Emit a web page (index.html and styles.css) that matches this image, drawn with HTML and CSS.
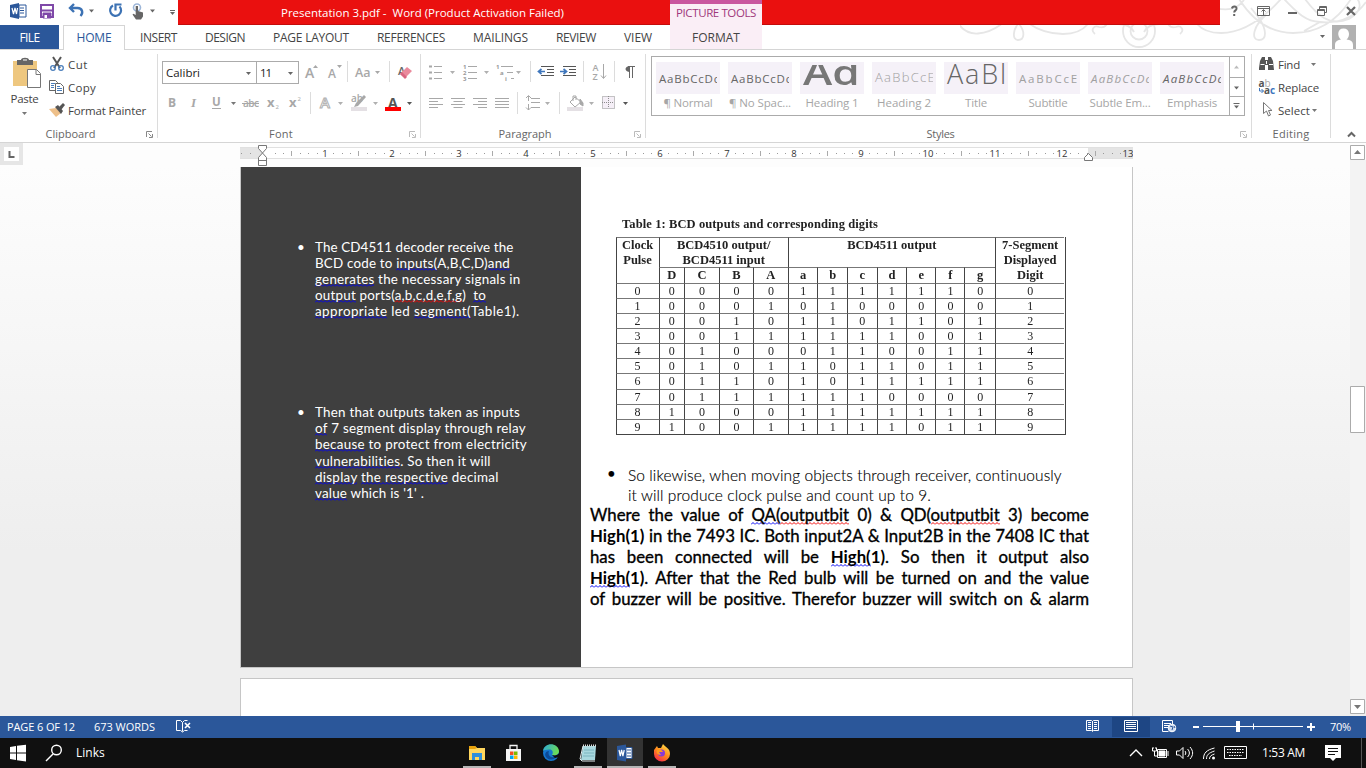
FILE: index.html
```html
<!DOCTYPE html>
<html lang="en">
<head>
<meta charset="utf-8">
<title>Presentation 3.pdf - Word</title>
<link rel="stylesheet" href="styles.css">
</head>
<body>
<div class="window">
  <svg class="swirls" width="406" height="49" viewBox="960 0 406 49">
    <g fill="none" stroke="#e6e6e6" stroke-width="1.800">
      <path d="M958 23c5 8 12 11 20 10.500s16-4 23-9M1018 24c-5 6-6 16 0 16 7 0 7-9 1-16M1028 23c10 7 22 11 35 11 12 0 20-4 25-10M1095 34c-5-4-1-9 4-7 3 1 6 0 8-3"/>
      <circle cx="1139" cy="31" r="16"/><circle cx="1139" cy="31" r="8.500"/>
      <path d="M1118 24c10 0 14 4 16 8M1160 24c-10 0-14 4-16 8M1180 34c5-4 1-9-4-7-3 1-6 0-8-3M1197 24c6 7 14 9 24 9 22 0 42-14 60-34M1239-1c14 22 32 34 54 34 24 0 44-12 58-34M1216 8c14 4 22 0 28-8M1266 15c-12 10-16 25-7 25 8 0 8-10 0-22l-8-10M1284-1c12 12 20 22 36 23M1305-1c12 16 24 28 44 20 14-8 12-18 6-22M1366 2c-10 14-24 22-46 20l-16 9"/>
    </g>
  </svg>
  <header class="titlebar">
    <div class="quick">
      <svg width="30" height="25" viewBox="6 0 30 25"><path d="M19 5h7v12h-7z" fill="#fff" stroke="#2b579a"/><path d="M20 8h4M20 10.500h4M20 13h4" stroke="#2b579a"/><path d="M10 5l9-2v16l-9-2z" fill="#2b579a"/><path d="M12 8l1.500 6 1.500-6 1.500 6 1-6" fill="none" stroke="#fff" stroke-width="1.200"/></svg>
      <svg width="30" height="25" viewBox="36 0 30 25"><path d="M41 5h12v12h-12z" fill="#fff" stroke="#7f49a8" stroke-width="2"/><path d="M41 11h12v-1h-12zM43 13h8v5h-8z" fill="#7f49a8" stroke="#7f49a8"/><path d="M44.500 15h2.500v3h-2.500z" fill="#fff"/></svg>
      <svg width="40" height="25" viewBox="66 0 40 25"><path d="M74 4l-4 4 4 4M70.500 8h7c5 0 6 5 3 8" fill="none" stroke="#3c72b4" stroke-width="2.400"/><path d="M89 9.500h5l-2.500 3z" fill="#666"/></svg>
      <svg width="24" height="25" viewBox="106 0 24 25"><path d="M113 5.500a5.500 5.500 0 1 0 6.500 1M115.500 10.500v-6h6" fill="none" stroke="#3c72b4" stroke-width="2.200"/></svg>
      <svg width="34" height="25" viewBox="130 0 34 25"><circle cx="137" cy="7.500" r="3.500" fill="none" stroke="#9db6d8" stroke-width="1.600"/><path d="M135.700 6h2.300v5l5 1.500v4l-2 3h-5l-3.500-5 1-.8 2.200 1.300z" fill="#666"/><path d="M150 9.500h5l-2.500 3z" fill="#666"/></svg>
      <svg width="14" height="25" viewBox="164 0 14 25"><path d="M170 10.500h5" stroke="#666"/><path d="M170 12h5l-2.500 3z" fill="#666"/></svg>
    </div>
    <div class="caption"><span class="fit" data-w="283">Presentation 3.pdf -&nbsp; Word (Product Activation Failed)</span></div>
    <div class="wincontrols">
      <svg width="146" height="25" viewBox="1220 0 146 25" fill="none" stroke="#666"><path d="M1232 8.500c.5-3 5-2.500 4.500.2 0 1.800-2.300 1.600-2.300 3.800M1234.200 14v2" stroke-width="2"/><path d="M1257.500 6.500h12v9h-12zM1257 8.500h13M1263.500 15v-5M1261.500 11.500l2-2 2 2"/><path d="M1288 13h9" stroke-width="2"/><path d="M1317.500 9.500h7v6h-7zM1319.500 9v-2.500h7v6h-2M1317.500 10.500h7M1319.500 7.500h7"/><path d="M1347 7l8 8M1355 7l-8 8" stroke-width="2.200"/></svg>
    </div>
    <div class="tooltab"><span class="fit" data-w="80">PICTURE TOOLS</span></div>
  </header>

  <nav class="tabs">
    <div class="file"><span class="fit" data-w="20">FILE</span></div>
    <div class="home"><span class="fit" data-w="35">HOME</span></div>
    <div class="tablist">
      <span class="fit" data-w="37">INSERT</span><span class="fit" data-w="40">DESIGN</span><span class="fit" data-w="76">PAGE LAYOUT</span><span class="fit" data-w="68">REFERENCES</span><span class="fit" data-w="55">MAILINGS</span><span class="fit" data-w="40">REVIEW</span><span class="fit" data-w="28">VIEW</span>
    </div>
    <div class="format"><span class="fit" data-w="48">FORMAT</span></div>
    <div class="account"><svg width="50" height="25" viewBox="1316 25 50 25"><path d="M1320 35h5l-2.500 3z" fill="#666"/><path d="M1332 25h24v24h-24z" fill="#b1b1b1"/><path d="M1335 49v-4c0-4 3-5 6-5.500-4-3-4-11 2.500-11s7 8 3 11c4 .5 6.500 1.500 6.500 5.500v4z" fill="#fff"/></svg></div>
  </nav>

  <section class="ribbon">
    <div class="group clipboard">
      <div class="groupbody">
        <div class="paste">
          <svg width="49" height="40" viewBox="0 50 49 40"><path d="M13 61h24v25h-24z" fill="#eec77f"/><path d="M17 60h4c0-3 8-3 8 0h4v5h-16z" fill="#666"/><path d="M23 60h4" stroke="#fff"/><path d="M27.500 69.500h9l4 4v14h-13z" fill="#fff" stroke="#777"/><path d="M36 69.500v5h5" fill="none" stroke="#777"/></svg>
          <span class="fit" data-w="28">Paste</span>
          <svg width="49" height="12" viewBox="0 108 49 12"><path d="M22 113h5l-2.500 3z" fill="#777"/></svg>
        </div>
        <div class="cmds">
          <div class="cmd"><svg width="19" height="23" viewBox="49 53 19 23" fill="none"><path d="M53 57l7 11M61 57l-7 11" stroke="#555" stroke-width="2"/><circle cx="53" cy="68" r="2.300" stroke="#4a7ebb" stroke-width="1.300"/><circle cx="61" cy="68" r="2.300" stroke="#4a7ebb" stroke-width="1.300"/></svg><span class="fit" data-w="20">Cut</span></div>
          <div class="cmd"><svg width="19" height="23" viewBox="49 76 19 23" fill="#fff" stroke="#666"><path d="M49.500 80.500h6l2 2v8h-8z"/><path d="M51 83.500h4M51 85.500h3M51 87.500h3" stroke="#4a7ebb"/><path d="M55.500 83.500h5l3 3v7h-8z"/><path d="M57 88.500h5M57 90.500h5M57 86.500h3" stroke="#4a7ebb"/></svg><span class="fit" data-w="28">Copy</span></div>
          <div class="cmd"><svg width="19" height="23" viewBox="49 99 19 23"><path d="M49 109l7-1 5 5-5 4z" fill="#eec08a"/><path d="M55 107l3-2 5 6-2 3z" fill="#555"/><path d="M59 107l4-4 2 2-4 5z" fill="#555"/></svg><span class="fit" data-w="78">Format Painter</span></div>
        </div>
      </div>
      <div class="grouplabel"><span class="fit" data-w="50">Clipboard</span><svg class="launcher" width="9" height="9"><path d="M1.500 7V1.500H7M3.500 3.500l3 3M7.500 4v3.500H4" fill="none" stroke="#888"/></svg></div>
    </div>

    <div class="group font">
      <div class="row first">
        <div class="combo name"><span class="fit" data-w="34">Calibri</span><svg width="9" height="8"><path d="M2 3h5l-2.500 3z" fill="#666"/></svg></div>
        <div class="combo size"><span class="fit" data-w="11">11</span><svg width="9" height="8"><path d="M2 3h5l-2.500 3z" fill="#666"/></svg></div>
        <svg width="121" height="26" viewBox="299 60 121 26"><g font-family="Open Sans,sans-serif" font-weight="600" fill="#a8a8a8"><text x="305" y="78" font-size="14">A</text><text x="328" y="78" font-size="12">A</text><text x="355" y="77" font-size="12.500">Aa</text><text x="398" y="75" font-size="11" fill="#666">A</text></g><path d="M313 68h5l-2.500-3zM337 65h5l-2.500 3zM375 71h5l-2.500 3z" fill="#a8a8a8"/><path d="M347.500 61v21M389.500 61v21" stroke="#dcdcdc"/><path d="M400 74l7-7 5 4-7 7z" fill="#ea8a9c"/><path d="M400 74l5 5 2-2-5-5z" fill="#d96680"/></svg>
      </div>
      <div class="row">
        <svg width="258" height="26" viewBox="162 90 258 26"><g font-family="Open Sans,sans-serif" fill="#a8a8a8"><text x="168" y="107" font-size="12" font-weight="700">B</text><text x="191" y="107" font-size="13" font-family="Liberation Serif,serif" font-style="italic" font-weight="700">I</text><text x="212" y="106" font-size="11.500" font-weight="700">U</text><text x="243" y="107" font-size="10" font-weight="600" textLength="16">abc</text><text x="267" y="107" font-size="13" font-weight="700">x</text><text x="275.500" y="109" font-size="6">2</text><text x="289" y="107" font-size="13" font-weight="700">x</text><text x="297.500" y="101" font-size="6">2</text><text x="320" y="108" font-size="15" fill="#fff" stroke="#b0b0b0" font-weight="600">A</text><text x="351" y="102" font-size="10" font-weight="600">ab</text><text x="388" y="108" font-size="14" font-weight="700" fill="#555">A</text></g><path d="M212 108.500h9M242 103.500h17" stroke="#a8a8a8"/><path d="M310.500 92v22" stroke="#dcdcdc"/><path d="M366 97l-8 9-4 1 2-4 8-8z" fill="#a8a8a8"/><path d="M351 107h16v4h-16z" fill="#e4e0e4"/><path d="M385 107h16v4h-16z" fill="#f00"/><path d="M231 102h5l-2.500 3z" fill="#777"/><path d="M338 102h5l-2.500 3zM373 102h5l-2.500 3z" fill="#b0b0b0"/><path d="M407 102h5l-2.500 3z" fill="#555"/></svg>
      </div>
      <div class="grouplabel"><span class="fit" data-w="24">Font</span><svg class="launcher" width="9" height="9"><path d="M1.500 7V1.500H7M3.500 3.500l3 3M7.500 4v3.500H4" fill="none" stroke="#bbb"/></svg></div>
    </div>

    <div class="group paragraph">
      <div class="row first">
        <svg width="108" height="26" viewBox="421 60 108 26" fill="none" stroke="#a8a8a8"><path d="M434 66.500h8M434 72.500h8M434 78.500h8M468 66.500h9M468 72.500h9M468 78.500h9M501 66.500h12M507 72.500h6M511 78.500h3"/><path d="M429 65.500h3v2h-3zM429 71.500h3v2h-3zM429 77.500h3v2h-3z" fill="#a8a8a8" stroke="none"/><g font-family="Open Sans,sans-serif" font-size="6" font-weight="700" fill="#999" stroke="none"><text x="463" y="68.500">1</text><text x="463" y="74.500">2</text><text x="463" y="80.500">3</text><text x="496" y="68.500">1</text><text x="500" y="74.500">a</text><text x="505" y="80.500">i</text></g><path d="M450 71h5l-2.500 3zM484 71h5l-2.500 3zM516 71h5l-2.500 3z" fill="#b0b0b0" stroke="none"/></svg>
        <svg width="117" height="26" viewBox="529 60 117 26" fill="none" stroke="#555"><path d="M530.500 61v21M583.500 61v21M614.500 61v21" stroke="#dcdcdc"/><path d="M541 66.500h13M547 69.500h7M547 72.500h7M541 75.500h13M563 66.500h13M569 69.500h7M569 72.500h7M563 75.500h13"/><path d="M545 71.500h-6M541.500 69l-3 2.500 3 2.500M560 71.500h6M563.500 69l3 2.500-3 2.500" stroke="#3f77bd" stroke-width="1.700"/><g font-family="Open Sans,sans-serif" font-size="9" font-weight="600" fill="#a8a8a8" stroke="none"><text x="592.500" y="71">A</text><text x="592.500" y="79.500">Z</text></g><path d="M603.500 64v14M601 75.500l2.500 3 2.500-3" stroke="#a8a8a8"/><path d="M629.500 66v12M632.500 66v12M628 66.500h7" stroke="#666"/><path d="M630 66c-6 0-6 6 0 6z" fill="#666" stroke="none"/></svg>
      </div>
      <div class="row">
        <svg width="100" height="26" viewBox="421 90 100 26" stroke="#a8a8a8"><path d="M429 98.500h14M429 101.500h9M429 104.500h14M429 107.500h9M451 98.500h14M453.500 101.500h9M451 104.500h14M453.500 107.500h9M473 98.500h14M478 101.500h9M473 104.500h14M478 107.500h9M495 98.500h14M495 101.500h14M495 104.500h14M495 107.500h14"/><path d="M517.500 92v22" stroke="#dcdcdc"/></svg>
        <svg width="124" height="26" viewBox="521 90 124 26" fill="none" stroke="#a8a8a8"><path d="M531 98.500h9M531 102.500h9M531 107.500h9M528.500 96v5M526 98l2.500-2.500 2.500 2.500M528.500 104v6M526 107.500l2.500 2.500 2.500-2.500"/><path d="M559.500 92v22" stroke="#dcdcdc"/><path d="M567 107h16v4h-16z" fill="#e4e0e4" stroke="none"/><path d="M570 102l5-5 6 5-6 5z M573 101v-5h3v4"/><path d="M580 99l3 4v3l-3-2z" fill="#a8a8a8"/><path d="M602.500 96.500h12v12h-12zM608.500 96v12M602 102.500h12" stroke="#8c8c8c" stroke-dasharray="1 1" fill="#f5eff7"/><path d="M545 102h5l-2.500 3zM589 102h5l-2.500 3z" fill="#b0b0b0" stroke="none"/><path d="M623 102h5l-2.500 3z" fill="#555" stroke="none"/></svg>
      </div>
      <div class="grouplabel"><span class="fit" data-w="53">Paragraph</span><svg class="launcher" width="9" height="9"><path d="M1.500 7V1.500H7M3.500 3.500l3 3M7.500 4v3.500H4" fill="none" stroke="#bbb"/></svg></div>
    </div>

    <div class="group styles">
      <div class="gallery">
        <div class="tile"><div class="sample"><span class="fit" data-w="61">AaBbCcDc</span></div><span class="fit" data-w="49">¶ Normal</span></div>
        <div class="tile"><div class="sample"><span class="fit" data-w="61">AaBbCcDc</span></div><span class="fit" data-w="62">¶ No Spac...</span></div>
        <div class="tile"><div class="sample h1"><span>Ad</span></div><span class="fit" data-w="53">Heading 1</span></div>
        <div class="tile"><div class="sample h2"><span class="fit" data-w="61">AaBbCcE</span></div><span class="fit" data-w="54">Heading 2</span></div>
        <div class="tile"><div class="sample ttl"><span class="fit" data-w="61">AaBl</span></div><span class="fit" data-w="22">Title</span></div>
        <div class="tile"><div class="sample pale"><span class="fit" data-w="60">AaBbCcE</span></div><span class="fit" data-w="39">Subtitle</span></div>
        <div class="tile"><div class="sample pale ital"><span class="fit" data-w="61">AaBbCcDc</span></div><span class="fit" data-w="61">Subtle Em...</span></div>
        <div class="tile"><div class="sample ital"><span class="fit" data-w="61">AaBbCcDc</span></div><span class="fit" data-w="50">Emphasis</span></div>
        <svg class="pager" width="15" height="58" viewBox="1229 57 15 58"><path d="M1229.500 57v58M1229 77.500h15M1229 96.500h15" stroke="#ababab"/><path d="M1234 68.500h5l-2.500-3z" fill="#bbb"/><path d="M1234 86.500h5l-2.500 3zM1234 105.500h5l-2.500 3z" fill="#666"/><path d="M1233.500 103.500h6" stroke="#666"/></svg>
      </div>
      <div class="grouplabel"><span class="fit" data-w="28">Styles</span><svg class="launcher" width="9" height="9"><path d="M1.500 7V1.500H7M3.500 3.500l3 3M7.500 4v3.500H4" fill="none" stroke="#bbb"/></svg></div>
    </div>

    <div class="group editing">
      <div class="cmds">
        <div class="cmd"><svg width="20" height="23" viewBox="1258 53 20 23"><path d="M1259 68l1-7 2-4h3v3h3v-3h3l2 4 1 9h-6v-5h-3v5h-6z" fill="#555"/><path d="M1260.500 64.500h4M1269 64.500h4M1266.500 61v3" stroke="#fff"/></svg><span class="fit" data-w="22">Find</span><svg width="20" height="23"><path d="M11 10h5l-2.500 3z" fill="#777"/></svg></div>
        <div class="cmd"><svg width="20" height="23" viewBox="1258 76 20 23" font-family="Open Sans,sans-serif" font-size="10" font-weight="700"><text x="1258.500" y="86.500" fill="#555">a<tspan fill="#aaa" font-weight="400">b</tspan></text><text x="1264" y="94" fill="#555">a<tspan fill="#3f77bd">c</tspan></text><path d="M1259.500 88v3h4M1261.500 89l2 2-2 2" fill="none" stroke="#3f77bd"/></svg><span class="fit" data-w="41">Replace</span></div>
        <div class="cmd"><svg width="20" height="23" viewBox="1258 99 20 23"><path d="M1263.500 102.500v11l3-2.500 2 5 2-1-2-4.500h3.500z" fill="#fff" stroke="#777"/></svg><span class="fit" data-w="32">Select</span><svg width="10" height="23"><path d="M2 10h5l-2.500 3z" fill="#777"/></svg></div>
      </div>
      <div class="grouplabel"><span class="fit" data-w="37">Editing</span></div>
    </div>
    <svg class="collapse" width="35" height="92" viewBox="1331 50 35 92"><path d="M1348 136.500l3.500-3.500 3.500 3.500" fill="none" stroke="#666" stroke-width="2"/></svg>
  </section>

  <div class="rulerbar">
    <div class="tabstop"><svg width="15" height="14"><path d="M5.500 4v6h5" fill="none" stroke="#666" stroke-width="2"/></svg></div>
    <svg id="ruler" width="893" height="24" viewBox="240 143 893 24"></svg>
    <svg class="up" width="16" height="24" viewBox="1350 143 16 24"><path d="M1350 160h16v7h-16z" fill="#f3f3f3"/><path d="M1350.500 145.500h14v14h-14z" fill="#fff" stroke="#ababab"/><path d="M1354 154h7l-3.500-4z" fill="#777"/></svg>
  </div>

  <main class="workspace">
    <div class="pages">
      <article class="page">
        <aside class="panel">
          <div class="bullet a"><i>•</i>
            <p><span class="fit" data-w="198.500">The CD4511 decoder receive the</span>
            <span class="fit" data-w="195">BCD code to <u>inputs(</u>A,B,C,D)<u>and</u></span>
            <span class="fit" data-w="205.500"><u>generates</u> the necessary signals in</span>
            <span class="fit" data-w="171"><u>output</u> ports(<u class="red">a,b,c,d,e,f,g</u>)&nbsp; <u>to</u></span>
            <span class="fit" data-w="204.500"><u>appropriate</u> led <u>segment(</u>Table1).</span></p>
          </div>
          <div class="bullet b"><i>•</i>
            <p><span class="fit" data-w="205">Then that outputs taken as inputs</span>
            <span class="fit" data-w="211"><u>of</u> 7 segment display through relay</span>
            <span class="fit" data-w="212"><u>because</u> to protect from electricity</span>
            <span class="fit" data-w="176"><u>vulnerabilities</u>. So then it will</span>
            <span class="fit" data-w="184"><u>display</u> <u>the respective</u> decimal</span>
            <span class="fit" data-w="109"><u>value</u> which is '1' .</span></p>
          </div>
        </aside>
        <div class="content">
          <figure class="figure">
            <figcaption><span class="fit" data-w="256">Table 1: BCD outputs and corresponding digits</span></figcaption>
            <div class="bcd" id="bcd"></div>
          </figure>
          <div class="bullet c"><i>•</i>
            <p><span class="fit" data-w="434">So likewise, when moving objects through receiver, continuously</span>
            <span class="fit" data-w="303">it will produce clock pulse and count up to 9.</span></p>
          </div>
          <div class="body">
            <p>Where the value of <u>QA(</u><u class="red">outputbit</u> 0) &amp; QD(<u class="red">outputbit</u> 3) become</p>
            <p><b>High(1)</b> in the 7493 IC. Both input2A &amp; Input2B in the 7408 IC that</p>
            <p>has been connected will be <u><b>High(</b></u><b>1)</b>. So then it output also</p>
            <p><u><b>High(</b></u><b>1)</b>. After that the Red bulb will be turned on and the value</p>
            <p>of buzzer will be positive. Therefor buzzer will switch on &amp; alarm</p>
          </div>
        </div>
      </article>
      <article class="page next"></article>
    </div>
    <svg class="scroll" width="16" height="549" viewBox="1350 167 16 549"><path d="M1350 167h16v534h-16z" fill="#f3f3f3"/><path d="M1350.500 386.500h14v46h-14zM1350.500 699.500h14v14h-14z" fill="#fff" stroke="#ababab"/><path d="M1354 705h7l-3.500 4z" fill="#777"/></svg>
  </main>

  <footer class="status">
    <span class="fit pageno" data-w="68">PAGE 6 OF 12</span><span class="fit" data-w="61">673 WORDS</span>
    <svg width="20" height="22" viewBox="174 716 20 22" fill="none" stroke="#fff"><path d="M182.500 722.500l-2-2h-4v10h4l2 1.500 2-1.500h3M182.500 722.500v9M182.500 722.500l2-2h3"/><path d="M185 723l5 5M190 723l-5 5" stroke-width="1.600"/></svg>
    <div class="views">
      <svg width="29" height="22" viewBox="1083 716 29 22" fill="none" stroke="#fff"><path d="M1086.500 720.500h5l1 1 1-1h5v10h-5l-1 1-1-1h-5zM1092.500 721v10M1088 722.500h3M1088 724.500h3M1088 726.500h3M1088 728.500h3M1094 722.500h3M1094 724.500h3M1094 726.500h3M1094 728.500h3"/></svg>
      <svg class="active" width="38" height="20" viewBox="1112 717 38 20" fill="none" stroke="#fff"><path d="M1124.500 720.500h13v11h-13zM1126 722.500h10M1126 724.500h10M1126 726.500h10M1126 728.500h10"/></svg>
      <svg width="216" height="22" viewBox="1150 716 216 22" fill="none" stroke="#fff"><path d="M1172.500 724v-3.500h-10v11h6M1164 723.500h7M1164 725.500h5M1164 727.500h4"/><circle cx="1172" cy="728" r="3.800" fill="#cfdcf0"/><path d="M1170 726l3 1-1 3M1174 726l1 2" stroke="#2b579a"/><path d="M1193 727h6M1307 727h8M1311 723v8" stroke-width="2"/><path d="M1203 726.500h100M1253.500 723.500v6"/><path d="M1236 721h4v11h-4z" fill="#fff" stroke="none"/><text x="1330" y="731" font-family="Open Sans,sans-serif" font-size="11" fill="#fff" stroke="none" textLength="21">70%</text></svg>
    </div>
  </footer>

  <footer class="taskbar">
    <svg width="70" height="30" viewBox="0 738 70 30"><path d="M10 747l6-1v6.500h-6zM17 745.800l9-1v7.700h-9zM10 753.500h6v6.500l-6-1zM17 753.500h9v8l-9-1.200z" fill="#fff"/><circle cx="56.500" cy="750" r="4.800" fill="none" stroke="#fff" stroke-width="1.400"/><path d="M53 754l-7 7" stroke="#fff" stroke-width="1.500"/></svg>
    <span class="fit links" data-w="27">Links</span>
    <div class="apps">
      <div class="app open"><svg width="28" height="30" viewBox="463 738 28 30"><path d="M469 746h6l2 2h8v12h-16z" fill="#ffd75e"/><path d="M469 746h6l2 2-2 1h-6z" fill="#e8a20c"/><path d="M472 753h10v7h-3v-3h-4v3h-3z" fill="#2f8fdb"/></svg></div>
      <div class="app"><svg width="28" height="30" viewBox="500 738 28 30"><path d="M506 749h15v12h-15z" fill="#f5f5f5"/><path d="M510 749v-3.500h7v3.500" fill="none" stroke="#f5f5f5" stroke-width="1.300"/><path d="M510 751.500h3.500v3.500h-3.500z" fill="#f25022"/><path d="M514 751.500h3.500v3.500h-3.500z" fill="#7fba00"/><path d="M510 755.500h3.500v3.500h-3.500z" fill="#00a4ef"/><path d="M514 755.500h3.500v3.500h-3.500z" fill="#ffb900"/></svg></div>
      <div class="app"><svg width="28" height="30" viewBox="537 738 28 30"><defs><linearGradient id="e1" x2="1" y2=".4"><stop offset="0" stop-color="#2aa7df"/><stop offset="1" stop-color="#6bdc57"/></linearGradient></defs><circle cx="551" cy="753" r="8" fill="#1576cf"/><path d="M543 751c1-9 15-9 16 0 0 4-4 5-7 4 2-3 0-6-3-5.500s-5 0-6 1.500z" fill="url(#e1)"/><path d="M549 751c-2 5 3 8 8 5-2 4-8 5-11 1-2-3 0-6 3-6z" fill="#0c4a97"/><path d="M552 755c3 1 6 0 7-2v4l-4 1z" fill="#101010"/></svg></div>
      <div class="app open"><svg width="28" height="30" viewBox="574 738 28 30"><path d="M583 746h13l-1 14h-14z" fill="#a8d8df"/><path d="M583 746l-3 13 2 2h13" fill="none" stroke="#e6eef0"/><path d="M584 750h10M584 753h10M583 756h11" stroke="#7bb4bf"/><path d="M583 745.500h13" stroke="#ddd" stroke-width="2" stroke-dasharray="1 1"/></svg></div>
      <div class="app open current"><svg width="36" height="30" viewBox="607 738 36 30"><path d="M626 747.500h6v11h-6z" fill="#fff" stroke="#2b579a"/><path d="M627 750h4M627 753h4M627 756h4" stroke="#2b579a"/><path d="M617 746l9-1.500v17l-9-1.500z" fill="#2b579a"/><path d="M619 750l1.300 6 1.300-6 1.300 6 1.300-6" fill="none" stroke="#fff" stroke-width="1.200"/></svg></div>
      <div class="app open"><svg width="28" height="30" viewBox="648 738 28 30"><defs><linearGradient id="f1" x1=".8" x2=".2" y2="1"><stop offset="0" stop-color="#ffe14a"/><stop offset=".5" stop-color="#ff8a1c"/><stop offset="1" stop-color="#f5224f"/></linearGradient></defs><path d="M654 750l3-4 1 2 3 0 2-4c2 3 7 4 7 10a8 7.500 0 0 1-16 0z" fill="url(#f1)"/><circle cx="661.500" cy="753" r="3.500" fill="#8a3ad6"/><path d="M657 750c3-2 5 0 6 2h-4l2 3c-4 0-5-3-4-5z" fill="#ff9a1f"/></svg></div>
    </div>
    <svg class="tray" width="130" height="30" viewBox="1124 738 130 30" fill="none" stroke="#fff"><path d="M1130 756l6-6 6 6" stroke-width="1.400"/><path d="M1157.500 749.500h9v8h-9zM1168 751v5" /><path d="M1159 751h6v5h-6z" fill="#fff"/><path d="M1152.500 748v3h4v-3M1154.500 751v5h3M1153 747v2M1156 747v2"/><path d="M1176.500 751h3l3.500-3.500v11l-3.500-3.500h-3zM1185 751c1 1 1 3 0 4M1187.500 749c2.500 2.500 2.500 5.500 0 8M1190 747c3.500 4 3.500 8 0 12"/><path d="M1203.500 759c0-6 3-9 11-11M1206.500 759c0-4 2-6 8-8M1209.500 759c0-3 2-4 5-5"/><circle cx="1213.500" cy="758" r="1.500" fill="#fff" stroke="none"/><path d="M1224.500 746.500h22v12h-22z"/><path d="M1227 749.500h17M1227 752.500h17M1229 755.500h13" stroke-dasharray="1.500 1"/></svg>
    <span class="fit clock" data-w="43">1:53 AM</span>
    <svg class="notify" width="58" height="30" viewBox="1308 738 58 30"><path d="M1325 745h16v13h-5l-3 3-3-3h-5z" fill="#fff"/><path d="M1328 748.500h10M1328 751.500h10M1328 754.500h7" stroke="#101010"/><path d="M1361.500 738v30" stroke="#555"/></svg>
  </footer>
</div>
<script src="script.js"></script>
</body>
</html>
```
FILE: styles.css
```css
* { box-sizing: border-box; }
body { margin: 0; font-family: "Open Sans", "Noto Sans", sans-serif; font-size: 11.5px; color: #444; overflow: hidden; }
svg { display: block; flex: none; }
p, figure { margin: 0; }
.fit { display: inline-block; white-space: pre; }
.window { position: relative; width: 1366px; height: 768px; display: flex; flex-direction: column; background: #fff; }
.swirls { position: absolute; left: 960px; top: 0; }

.titlebar { position: relative; display: flex; height: 25px; flex: none; }
.quick { display: flex; width: 178px; padding-left: 6px; }
.caption { width: 1042px; padding-left: 103px; background: #ea100f; border-bottom: 1px solid #c40c0b; color: #fff; line-height: 25px; }
.tooltab { position: absolute; left: 670px; top: 0; width: 92px; height: 25px; background: #faeef6; border-top: 4px solid #c9579f; color: #a0387c; text-align: center; line-height: 18px; }

.tabs { position: relative; display: flex; height: 25px; flex: none; border-bottom: 1px solid #d5d5d5; line-height: 25px; font-size: 12px; }
.file { width: 59px; background: #2b579a; color: #fff; text-align: center; }
.home { width: 62px; height: 25px; margin-left: 4px; border: 1px solid #d5d5d5; border-bottom: 0; background: #fff; color: #2b579a; text-align: center; line-height: 24px; }
.tablist { display: flex; gap: 28px; width: 545px; padding-left: 15px; }
.format { width: 92px; height: 24px; background: #faeef6; text-align: center; }
.account { margin-left: auto; }

.ribbon { display: flex; height: 93px; flex: none; border-bottom: 1px solid #d5d5d5; }
.group { position: relative; display: flex; flex-direction: column; height: 92px; }
.group::after { content: ""; position: absolute; right: 0; top: 4px; height: 84px; width: 1px; background: #dcdcdc; }
.clipboard { width: 158px; }
.font { width: 263px; padding-left: 4px; }
.paragraph { width: 225px; }
.styles { width: 606px; padding-left: 5px; }
.editing { width: 79px; padding-left: 6px; }
.groupbody { display: flex; }
.paste { width: 49px; display: flex; flex-direction: column; align-items: center; line-height: 17px; }
.cmds { padding-top: 3px; }
.cmd { display: flex; height: 23px; line-height: 23px; }
.grouplabel { position: absolute; left: 0; right: 17px; bottom: 0; height: 17px; line-height: 17px; text-align: center; color: #666; font-size: 11px; }
.launcher { position: absolute; right: -13px; top: 5px; }
.editing .grouplabel { right: 1px; }
.row { display: flex; height: 30px; padding-top: 0; align-items: flex-start; }
.row.first { height: 40px; padding-top: 10px; }
.combo { display: flex; align-items: center; justify-content: space-between; height: 23px; margin-top: 1px; border: 1px solid #ababab; padding: 0 3px; color: #222; }
.combo.name { width: 95px; }
.combo.size { width: 43px; margin-left: -1px; }
.gallery { display: flex; gap: 8px; width: 594px; height: 60px; margin-top: 6px; padding: 5px 0 0 4px; border: 1px solid #ababab; color: #a6a6a6; }
.tile { width: 64px; text-align: center; line-height: 17px; }
.sample { height: 32px; background: #f5f1f8; overflow: hidden; line-height: 34px; color: #666; font-size: 11.5px; text-align: left; padding-left: 3px; border-right: 3px solid #f5f1f8; white-space: nowrap; }
.sample.h1 { border-top: 3px solid #f5f1f8; font-size: 34px; line-height: 15px; font-weight: 600; color: #777; }
.sample.h1 span { display: inline-block; transform: scaleX(1.3); transform-origin: 0 0; }
.sample.h2, .sample.pale { color: #a0a0a0; }
.sample.h2 { font-size: 13px; font-weight: 300; line-height: 31px; }
.sample.ttl { font-size: 27px; line-height: 23px; font-weight: 300; }
.sample.ital { font-style: italic; }
.pager { margin: -5px 0 0 -3px; }

.rulerbar { display: flex; height: 24px; flex: none; background: #fdfdfd; }
.tabstop { width: 23px; height: 22px; background: #e6e6e6; padding: 4px; margin-right: 217px; }
.tabstop svg { background: #fff; }
.up { margin-left: 217px; }

.workspace { display: flex; height: 549px; flex: none; background: linear-gradient(#fdfdfd, #eeeeee 70%); overflow: hidden; }
.pages { width: 893px; margin-left: 240px; }
.page { display: flex; height: 501px; background: #fff; border: 1px solid #c6c6c6; border-top: 0; margin-bottom: 10px; }
.page.next { height: 60px; border-top: 1px solid #c6c6c6; }
.scroll { margin-left: 217px; }
.panel { width: 340px; background: #3f3f3f; color: #fff; font-family: Lato, sans-serif; font-size: 13.4px; line-height: 16px; padding: 72px 0 0 56px; }
.bullet { display: flex; }
.bullet i { font-style: normal; width: 18px; flex: none; }
.bullet p { display: flex; flex-direction: column; align-items: flex-start; }
.bullet.a { height: 165px; }
.bullet.b { line-height: 16.2px; }
u { text-decoration: none; background: url("data:image/svg+xml,%3Csvg xmlns='http://www.w3.org/2000/svg' width='4' height='3'%3E%3Cpath d='M0 2.500L2 .5 4 2.500' fill='none' stroke='%230000f5'/%3E%3C/svg%3E") 0 100% repeat-x; }
u.red { background-image: url("data:image/svg+xml,%3Csvg xmlns='http://www.w3.org/2000/svg' width='4' height='3'%3E%3Cpath d='M0 2.500L2 .5 4 2.500' fill='none' stroke='%23f00000'/%3E%3C/svg%3E"); }
.content { width: 551px; font-family: Lato, sans-serif; color: #000; }
.figure { height: 298px; padding: 50px 0 0 35px; font-family: "Liberation Serif", serif; color: #222; filter: blur(.4px); }
figcaption { height: 20px; line-height: 15px; font-weight: 700; font-size: 12.5px; padding-left: 6px; }
.bcd { display: grid; grid-template-columns: 43px 25.700px 34.700px 34px 35px 29.600px 29.400px 30px 29px 29.600px 29px 30.400px 69.600px; grid-template-rows: 30.400px repeat(11, 15.170px); width: 450px; border-right: 1px solid #444; border-bottom: 1px solid #444; font-size: 12px; line-height: 15px; text-align: center; margin-left: -.5px; }
.bcd div { border-left: 1px solid #444; border-top: 1px solid #777; }
.bcd .head { font-weight: 700; font-size: 12.500px; }
.bcd .tall { grid-row: span 2; }
.bcd .four { grid-column: span 4; }
.bcd .seven { grid-column: span 7; }
.bullet.c { font-weight: 300; font-size: 15.5px; line-height: 20px; padding-left: 26px; -webkit-text-stroke: .15px #000; }
.bullet.c i { width: 21px; font-weight: 400; font-size: 15px; line-height: 17px; }
.body { width: 508px; margin-top: -1px; padding: 0 0 0 9px; font-size: 16.8px; line-height: 21px; -webkit-text-stroke: .35px #000; }
.body p { text-align-last: justify; white-space: nowrap; }
.body b { -webkit-text-stroke: 0; }

.status { display: flex; height: 22px; flex: none; background: #2b579a; color: #fff; line-height: 22px; font-size: 11px; padding-left: 7px; gap: 19px; }
.views { display: flex; margin-left: auto; }
.active { background: #1e4684; margin-top: 1px; }
.taskbar { display: flex; height: 30px; flex: none; background: #101010; color: #fff; line-height: 29px; font-size: 12px; }
.links { margin-left: 6px; width: 27px; }
.apps { display: flex; gap: 9px; margin-left: 360px; width: 220px; }
.app { height: 30px; width: 28px; flex: none; }
.app.open { box-shadow: inset 0 -2px #b5b5b5; }
.current { background: #333; width: 36px; margin: 0 -4px 0 -4px; }
.tray { margin-left: auto; }
.clock { margin: 0 0 0 8px; }
.notify { margin-left: 3px; }
```
FILE: script.js
```js
// Ruler: numbered inches with eighth-inch dots and half-inch bars.
(function () {
  var step = 66.96, zero = 258;
  var s = '<path d="M240 148h893v11h-893z" fill="#fff"/><path d="M240 148h22v11h-22zM1088 148h45v11h-45z" fill="#e4e4e4"/>' +
    '<path d="M240 147.500h893M240 158.500h893" stroke="#e0e0e0"/>';
  for (var k = -2; k <= 104; k++) {
    var x = Math.round(zero + k * step / 8);
    if (k > 0 && k % 8 === 0) {
      s += '<text x="' + x + '" y="157" text-anchor="middle" font-size="9.500" fill="#333">' + k / 8 + '</text>';
    } else if (k % 8 === 4 && k > 0) {
      s += '<path d="M' + (x + 0.5) + ' 151v5" stroke="#aaa"/>';
    } else if (Math.abs(k % 8) !== 0 && Math.abs(x - 262) > 5) {
      s += '<path d="M' + x + ' 153.500h1" stroke="#999"/>';
    }
  }
  s += '<path d="M258.500 145.500h8v3l-4 4.500 4 4.500v8h-8v-8l4-4.500-4-4.500zM258.500 160.500h8" fill="#fff" stroke="#777"/>' +
    '<path d="M1084.500 160.500v-3l4-4 4 4v3z" fill="#fff" stroke="#777"/>';
  document.getElementById('ruler').innerHTML = s;
})();

// Truth table of the counter and the decoder.
(function () {
  var rows = ['00001111110', '00010100000', '00101101101', '00111111001', '01000110011',
    '01011011011', '01101011111', '01111110000', '10001111111', '10011111011'];
  var h = '<div class="head tall">Clock<br>Pulse</div><div class="head four">BCD4510 output/<br>BCD4511 input</div>' +
    '<div class="head seven">BCD4511 output</div><div class="head tall">7-Segment<br>Displayed<br>Digit</div>';
  'DCBAabcdefg'.split('').forEach(function (c) { h += '<div class="head">' + c + '</div>'; });
  rows.forEach(function (r, i) {
    h += '<div>' + i + '</div>';
    r.split('').forEach(function (c) { h += '<div>' + c + '</div>'; });
    h += '<div>' + i + '</div>';
  });
  document.getElementById('bcd').innerHTML = h;
})();

// Track each label to its given width.
document.querySelectorAll('.fit').forEach(function (el) {
  var target = parseFloat(el.dataset.w), n = el.textContent.length;
  el.style.letterSpacing = (target - el.getBoundingClientRect().width) / n + 'px';
});
```
